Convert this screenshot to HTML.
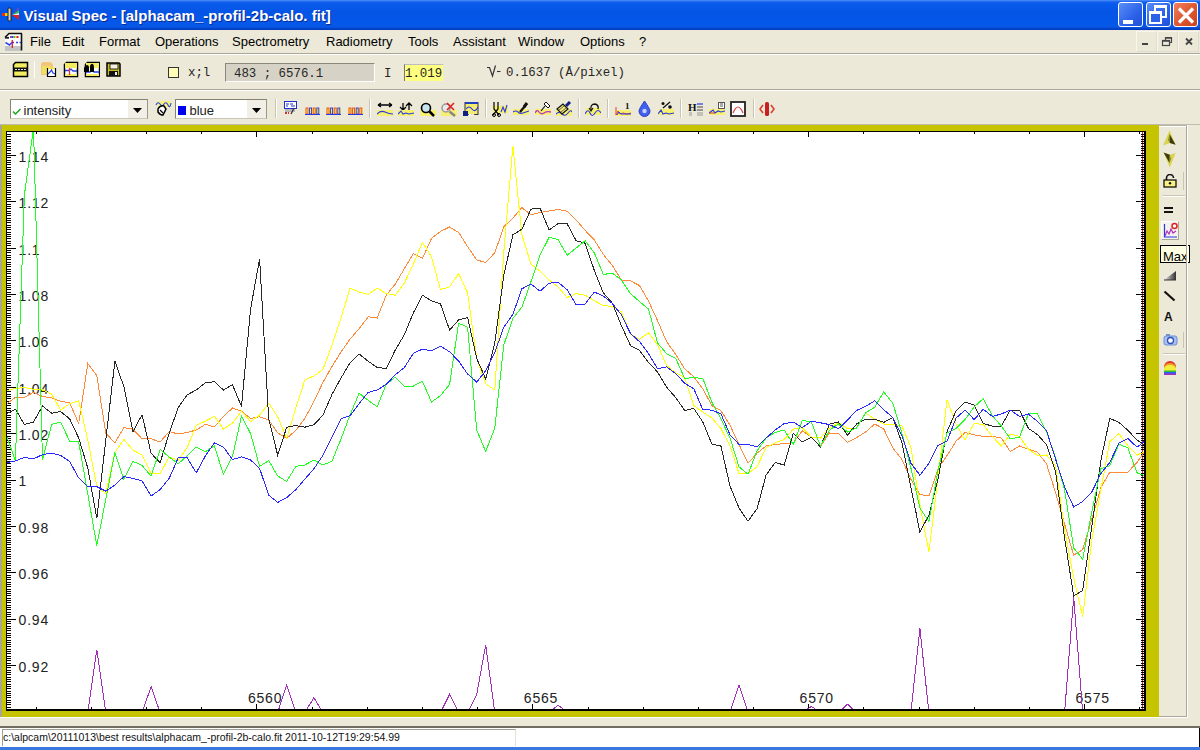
<!DOCTYPE html>
<html><head><meta charset="utf-8">
<style>
*{margin:0;padding:0;box-sizing:border-box}
html,body{width:1200px;height:750px;overflow:hidden;background:#ECE9D8;font-family:"Liberation Sans",sans-serif;position:relative}
.a{position:absolute}
#title{left:0;top:0;width:1200px;height:30px;background:linear-gradient(#5599FF 0px,#2A70F2 1px,#0A5CEC 3px,#0554E6 12px,#0458EA 24px,#0A56E4 27px,#0040C4 29px,#0038B8 30px)}
#title .t{left:23.5px;top:6.5px;color:#fff;font-weight:bold;font-size:15px;white-space:nowrap;text-shadow:1px 1px 0 #0A2A90}
.wb{top:2px;width:25px;height:25px;border:1px solid #fff;border-radius:3px;background:#2C6AF5}
.menu{top:30px;height:23px;left:0;width:1200px}
.menu span{position:absolute;top:4px;font-size:13px;color:#000;white-space:nowrap}
.hl{left:0;width:1200px;height:1px;background:#ACA899}
.hw{left:0;width:1200px;height:1px;background:#fff}
.mono{font-family:"Liberation Mono",monospace;font-size:12.5px;color:#262626;white-space:nowrap}
.sep{width:1px;height:22px;background:#C5C2B2;border-right:1px solid #fff}
.combo{background:#fff;border:1px solid #7F9DB9}
</style></head><body>
<div id="title" class="a">
  <svg class="a" style="left:2px;top:6px" width="18" height="16" viewBox="0 0 18 16">
    <rect x="0" y="7" width="7" height="3" fill="#E8D800"/><rect x="0" y="7" width="3" height="3" fill="#E03020"/>
    <rect x="6" y="2" width="3" height="13" rx="1" fill="#D8D0C0" stroke="#222" stroke-width="1"/>
    <polygon points="10,9 17,4 17,7" fill="#40C040"/><polygon points="10,9 17,9 17,14" fill="#E02020"/>
    <polygon points="10,8 17,1 17,3" fill="#8040C0"/><polygon points="10,9 17,7 17,9" fill="#F0F0F0"/>
  </svg>
  <div class="a t">Visual Spec - [alphacam_-profil-2b-calo. fit]</div>
  <div class="a wb" style="left:1118px;background:linear-gradient(135deg,#5A8EF8,#2C62E8 60%,#2050D8)"><div class="a" style="left:4px;top:17px;width:10px;height:4px;background:#fff"></div></div>
  <div class="a wb" style="left:1146px;background:linear-gradient(135deg,#5A8EF8,#2C62E8 60%,#2050D8)"><div class="a" style="left:7px;top:2px;width:13px;height:13px;border:2px solid #fff;border-top-width:3px"></div><div class="a" style="left:2px;top:8px;width:13px;height:13px;border:2px solid #fff;border-top-width:3px;background:#2C62E8"></div></div>
  <div class="a wb" style="left:1173px;background:linear-gradient(135deg,#F08060,#E05A30 50%,#C84020)">
    <svg class="a" style="left:2px;top:3px" width="20" height="19" viewBox="0 0 20 19"><path d="M3 2.5L17 16.5M17 2.5L3 16.5" stroke="#fff" stroke-width="3.2"/></svg></div></div>
</div>
<div class="a menu">
  <svg class="a" style="left:4px;top:1px" width="20" height="21" viewBox="0 0 20 21">
    <path d="M1 6L5 2H18V19H1Z" fill="#fff"/><rect x="1" y="15" width="16" height="5" fill="#C4C4C4"/>
    <path d="M1 6.5L5 2.5H18M17.5 2.5V19.5" fill="none" stroke="#111" stroke-width="1.6"/><path d="M1 6.8H5" stroke="#222" stroke-width="1.8"/>
    <rect x="6" y="5" width="2" height="2" fill="#A040C0"/><rect x="8" y="5" width="1.5" height="2" fill="#3040F0"/><rect x="9.5" y="5" width="1.5" height="2" fill="#30D030"/><rect x="11" y="5" width="1.5" height="2" fill="#F0E020"/><rect x="12.5" y="5" width="2" height="2" fill="#E02020"/>
    <path d="M1.5 11.5L5.5 14L8 11.5H10M12 11.5H14M15.5 11.5H17" stroke="#3040F0" fill="none" stroke-width="1.5"/><path d="M8.3 9V17" stroke="#E02020" stroke-width="1.3"/>
  </svg>
  <span style="left:30px">File</span><span style="left:62px">Edit</span><span style="left:99px">Format</span><span style="left:155px">Operations</span><span style="left:232px">Spectrometry</span><span style="left:326px">Radiometry</span><span style="left:408px">Tools</span><span style="left:453px">Assistant</span><span style="left:518px">Window</span><span style="left:580px">Options</span><span style="left:639px">?</span>
  <div class="a" style="left:1136px;top:1px;width:21px;height:21px;border:1px solid #F8F6EE;border-right-color:#E0DDD0;border-bottom-color:#E0DDD0"></div>
  <div class="a" style="left:1157px;top:1px;width:21px;height:21px;border:1px solid #F8F6EE;border-right-color:#E0DDD0;border-bottom-color:#E0DDD0"></div>
  <div class="a" style="left:1178px;top:1px;width:21px;height:21px;border:1px solid #F8F6EE;border-right-color:#E0DDD0;border-bottom-color:#E0DDD0"></div>
  <svg class="a" style="left:1136px;top:0" width="64" height="23" viewBox="0 0 64 23">
    <rect x="6" y="13" width="6" height="2" fill="#444"/>
    <path d="M29.5 10.5V7.5H35.5V12.5H33.5" fill="none" stroke="#444" stroke-width="1.2"/><rect x="26.5" y="10.5" width="7" height="5" fill="none" stroke="#444" stroke-width="1.2"/><path d="M29 8H35M26 11H33" stroke="#444" stroke-width="1.5"/>
    <path d="M50 8.5L56 14.5M56 8.5L50 14.5" stroke="#444" stroke-width="1.8"/>
  </svg>
</div>
<div class="a hl" style="top:53px"></div><div class="a hw" style="top:54px"></div>
<div class="a hl" style="top:89px"></div><div class="a hw" style="top:90px"></div>
<div class="a hl" style="top:124px;background:#C0BDB0"></div>

<!-- toolbar 1 -->
<svg class="a" style="left:12px;top:61px" width="17" height="17" viewBox="0 0 17 17">
  <path d="M3.5 1.5H15.5V15.5H1.5V3.5Z" fill="#F4EC60" stroke="#000" stroke-width="1.5"/>
  <rect x="1.5" y="6.5" width="14" height="4" fill="#111"/><path d="M3 8.5H14" stroke="#ddd" stroke-width="1" stroke-dasharray="2 1"/>
</svg>
<div class="a sep" style="left:34px;top:61px;height:17px"></div>
<svg class="a" style="left:40px;top:61px" width="17" height="17" viewBox="0 0 17 17">
  <path d="M1 4Q1 1 4 1H9Q12 1 13 4V14H1Z" fill="#F4C070" opacity=".9"/><path d="M2 5H11V13H2Z" fill="#F0E060"/>
  <path d="M7.5 7.5H15.5V15.5H7.5Z" fill="#fff" stroke="#000" stroke-width="1.2"/><path d="M8 7.5H15" stroke="#F0E050" stroke-width="1.5"/>
  <path d="M8 13L10 11L11.5 9L13 12L15 13" stroke="#2040E0" fill="none" stroke-width="1.2"/>
</svg>
<svg class="a" style="left:63px;top:61px" width="16" height="17" viewBox="0 0 16 17">
  <path d="M3.5 1.5H14.5V15.5H1.5V3.5Z" fill="#fff" stroke="#000" stroke-width="1.5"/>
  <rect x="2" y="2" width="12" height="5" fill="#F4EC60"/><rect x="2" y="13" width="12" height="2" fill="#F4EC60"/>
  <path d="M2 9.5H6L8 8L10 10H14" stroke="#2040E0" fill="none" stroke-width="1.3"/><path d="M6.5 7V14" stroke="#E03030" stroke-width="1.3"/>
</svg>
<svg class="a" style="left:84px;top:61px" width="16" height="17" viewBox="0 0 16 17">
  <path d="M3.5 1.5H15.5V15.5H1.5V3.5Z" fill="#fff" stroke="#000" stroke-width="1.5"/>
  <rect x="2" y="2" width="13" height="5" fill="#F4EC60"/><rect x="2" y="13" width="13" height="2" fill="#F4EC60"/>
  <path d="M2 11L6 11L8 8L10 11H15" stroke="#2040E0" fill="none" stroke-width="1.3"/>
  <path d="M0 7Q1 4 3 4Q5 4 5 7V11H0Z M6 5Q7 2 9 3Q10 4 10 7V11H6Z" fill="#000"/>
</svg>
<svg class="a" style="left:106px;top:62px" width="15" height="15" viewBox="0 0 15 15">
  <path d="M1 1H13L14 2V14H1Z" fill="#C8C020" stroke="#000" stroke-width="1.5"/>
  <rect x="4" y="2" width="8" height="5" fill="#F4F0E0" stroke="#000" stroke-width=".8"/><rect x="3" y="9" width="9" height="5" fill="#111"/><rect x="9" y="10" width="2" height="3" fill="#eee"/>
</svg>
<div class="a" style="left:168px;top:67px;width:11px;height:11px;background:#FFFFB8;border:1px solid #333"></div>
<div class="a mono" style="left:188px;top:66px;font-size:12.4px;letter-spacing:0">x;l</div>
<div class="a" style="left:225px;top:63px;width:150px;height:19px;background:#D6D3C6;border-top:1px solid #8A887C;border-left:1px solid #8A887C;border-bottom:1px solid #fff;border-right:1px solid #fff"></div>
<div class="a mono" style="left:234px;top:67px;font-size:12.4px;letter-spacing:0">483 ; 6576.1</div>
<div class="a mono" style="left:384px;top:67px;font-size:12.4px;letter-spacing:0">I</div>
<div class="a" style="left:404px;top:64px;width:39px;height:17px;background:#FFFF80;border-left:1px solid #777;border-top:1px solid #bbb"></div>
<div class="a mono" style="left:405px;top:67px;font-size:12.4px;letter-spacing:0">1.019</div>
<svg class="a" style="left:486px;top:64px" width="16" height="14" viewBox="0 0 16 14"><path d="M1 3.5H3.5L6.5 12L9.5 1.5" fill="none" stroke="#333" stroke-width="1.2"/><path d="M11 7.5H14.5" stroke="#333" stroke-width="1.1"/></svg>
<div class="a mono" style="left:506px;top:66px;font-size:12.4px;letter-spacing:0">0.1637 (&#197;/pixel)</div>
<!-- toolbar 2 -->
<div class="a combo" style="left:10px;top:99px;width:138px;height:20px;border:1px solid #858373;border-bottom-color:#C8C6BA;border-right-color:#9A988A"></div>
<div class="a" style="left:128px;top:100px;width:19px;height:18px;background:#F2F0E6"></div>
<svg class="a" style="left:133px;top:108px" width="10" height="6"><path d="M0 0H9L4.5 5Z" fill="#000"/></svg>
<svg class="a" style="left:12px;top:106px" width="10" height="10"><path d="M1 5.5L3.5 8L8.5 3" fill="none" stroke="#20A020" stroke-width="1.5"/></svg>
<div class="a" style="left:23.5px;top:103px;font-size:13px;color:#222">intensity</div>
<svg class="a" style="left:155px;top:100px" width="17" height="17" viewBox="0 0 17 17">
  <rect x="3" y="1" width="13" height="6" fill="#F8F080"/><path d="M1 5Q3 1 5 4T9 4T13 5T16 3" fill="none" stroke="#2040E0" stroke-width="1.1"/>
  <path d="M3 9Q5 5 9 6L11 9L8 15Q5 15 3 12Z" fill="#fff" stroke="#000" stroke-width="1.5"/><path d="M5 10L8 13" stroke="#000" stroke-width="1.2"/>
</svg>
<div class="a combo" style="left:175px;top:99px;width:92px;height:20px;border:1px solid #858373;border-bottom-color:#C8C6BA;border-right-color:#9A988A"></div>
<div class="a" style="left:247px;top:100px;width:19px;height:18px;background:#F2F0E6"></div>
<svg class="a" style="left:252px;top:108px" width="10" height="6"><path d="M0 0H9L4.5 5Z" fill="#000"/></svg>
<div class="a" style="left:178px;top:106px;width:8px;height:9px;background:#0000F0"></div>
<div class="a" style="left:189.5px;top:103px;font-size:13px;color:#222">blue</div>

<!-- ICONS -->
<div class="a" style="left:275px;top:99px;width:1px;height:19px;background:#C8C5B4"></div><div class="a" style="left:276px;top:99px;width:1px;height:19px;background:#fff"></div>
<svg class="a" style="left:284px;top:101px" width="13" height="14" viewBox="0 0 13 14"><rect x="0.5" y="0.5" width="12" height="7" fill="#fff" stroke="#2030D0"/><path d="M2 3H5M6 3H9M2 5H4M7 5H11" stroke="#2030D0" stroke-width="1.2"/><rect x="1" y="8" width="10" height="3" fill="#B8B8B8"/><path d="M1 12H5" stroke="#D03030" stroke-width="2" stroke-dasharray="2 1"/><path d="M7 13L10 7" stroke="#333" stroke-width="1.3"/></svg>
<svg class="a" style="left:305px;top:107px" width="15" height="9" viewBox="0 0 15 9"><rect x="0" y="1" width="15" height="6" fill="#F8F070"/><rect x="1.0" y="1" width="2" height="6" fill="none" stroke="#E84020" stroke-width="0.9"/><rect x="4.6" y="1" width="2" height="6" fill="none" stroke="#2030E0" stroke-width="0.9"/><rect x="8.2" y="1" width="2" height="6" fill="none" stroke="#E84020" stroke-width="0.9"/><rect x="11.8" y="1" width="2" height="6" fill="none" stroke="#2030E0" stroke-width="0.9"/><path d="M0 7.5H15" stroke="#2838E8" stroke-width="1"/></svg>
<svg class="a" style="left:326px;top:107px" width="15" height="9" viewBox="0 0 15 9"><rect x="0" y="1" width="15" height="6" fill="#F8F070"/><rect x="1.0" y="1" width="2" height="6" fill="none" stroke="#E84020" stroke-width="0.9"/><rect x="4.6" y="1" width="2" height="6" fill="none" stroke="#2030E0" stroke-width="0.9"/><rect x="8.2" y="1" width="2" height="6" fill="none" stroke="#E84020" stroke-width="0.9"/><rect x="11.8" y="1" width="2" height="6" fill="none" stroke="#2030E0" stroke-width="0.9"/><path d="M0 7.5H15" stroke="#2838E8" stroke-width="1"/></svg>
<svg class="a" style="left:348px;top:107px" width="15" height="9" viewBox="0 0 15 9"><rect x="0" y="1" width="15" height="6" fill="#F8F070"/><rect x="1.0" y="1" width="2" height="6" fill="none" stroke="#E84020" stroke-width="0.9"/><rect x="4.6" y="1" width="2" height="6" fill="none" stroke="#E84020" stroke-width="0.9"/><rect x="8.2" y="1" width="2" height="6" fill="none" stroke="#2030E0" stroke-width="0.9"/><rect x="11.8" y="1" width="2" height="6" fill="none" stroke="#E84020" stroke-width="0.9"/><path d="M0 7.5H15" stroke="#2838E8" stroke-width="1"/></svg>
<div class="a" style="left:369px;top:99px;width:1px;height:19px;background:#C8C5B4"></div><div class="a" style="left:370px;top:99px;width:1px;height:19px;background:#fff"></div>
<svg class="a" style="left:377px;top:102px" width="16" height="15" viewBox="0 0 16 15"><path d="M1 3H15M1 3L4 1M1 3L4 5M15 3L12 1M15 3L12 5" stroke="#000" stroke-width="1.3" fill="none"/><rect x="0" y="8" width="16" height="6" fill="#F8F070"/><path d="M0 12Q4 8 8 10T16 12" fill="none" stroke="#2838E8" stroke-width="1.1"/></svg>
<svg class="a" style="left:398px;top:102px" width="16" height="15" viewBox="0 0 16 15"><path d="M5 1V8M2 5L5 8L8 5M11 8V1M8 4L11 1L14 4" stroke="#000" stroke-width="1.3" fill="none"/><rect x="0" y="8" width="16" height="6" fill="#F8F070"/><path d="M0 12L3 9L5 12L8 11L11 12L16 11" fill="none" stroke="#2838E8" stroke-width="1.1"/></svg>
<svg class="a" style="left:420px;top:102px" width="16" height="15" viewBox="0 0 16 15"><rect x="0" y="8" width="16" height="6" fill="#F8F070"/><circle cx="6" cy="6" r="4.5" fill="#C8E4F0" stroke="#000" stroke-width="1.6"/><path d="M9.5 9.5L14 14" stroke="#000" stroke-width="2.5"/></svg>
<svg class="a" style="left:441px;top:102px" width="16" height="15" viewBox="0 0 16 15"><rect x="0" y="8" width="16" height="6" fill="#F8F070"/><circle cx="5" cy="6" r="4" fill="#E8E8E8" stroke="#999" stroke-width="1.5"/><path d="M8.5 9.5L14 14" stroke="#888" stroke-width="2.5"/><path d="M6 1L13 8M13 1L6 8" stroke="#E02020" stroke-width="1.6"/></svg>
<svg class="a" style="left:463px;top:101px" width="16" height="16" viewBox="0 0 16 16"><rect x="2" y="1.5" width="13" height="12" fill="#F4EC70" stroke="#333" stroke-width="1"/><rect x="2" y="1" width="13" height="2" fill="#2040C0"/><path d="M3 8Q6 4 9 8T15 6" fill="none" stroke="#2838E8" stroke-width="1.1"/><rect x="0" y="10" width="5" height="5" fill="#102080"/><path d="M6 13Q8 15 11 13" stroke="#fff" stroke-width="1.5" fill="none"/></svg>
<div class="a" style="left:485px;top:99px;width:1px;height:19px;background:#C8C5B4"></div><div class="a" style="left:486px;top:99px;width:1px;height:19px;background:#fff"></div>
<svg class="a" style="left:492px;top:101px" width="16" height="16" viewBox="0 0 16 16"><rect x="1" y="5" width="15" height="7" fill="#F8F070"/><path d="M9 11L11 6L13 11L15 4" fill="none" stroke="#2838E8" stroke-width="1.1"/><path d="M2 1V8L7 14M6 1V8L1 14" stroke="#000" stroke-width="1.2" fill="none"/><circle cx="2" cy="14" r="1.5" fill="none" stroke="#000"/><circle cx="7" cy="14" r="1.5" fill="none" stroke="#000"/></svg>
<svg class="a" style="left:513px;top:101px" width="16" height="16" viewBox="0 0 16 16"><rect x="0" y="8" width="16" height="6" fill="#F8F070"/><path d="M0 11Q3 9 5 11T10 12T16 10" fill="none" stroke="#2838E8" stroke-width="1.1"/><path d="M7 11L12 5" stroke="#111" stroke-width="2.2"/><path d="M11 6L14 2" stroke="#111" stroke-width="3"/></svg>
<svg class="a" style="left:535px;top:101px" width="16" height="16" viewBox="0 0 16 16"><rect x="0" y="8" width="16" height="6" fill="#F8F070"/><path d="M0 12Q2 8 4 11T9 12T16 11" fill="none" stroke="#C030C0" stroke-width="1.3"/><path d="M6 10L10 5" stroke="#111" stroke-width="1.2"/><path d="M9 3L11 1L15 5L13 7Z" fill="#fff" stroke="#111"/></svg>
<svg class="a" style="left:556px;top:101px" width="16" height="16" viewBox="0 0 16 16"><rect x="0" y="8" width="16" height="7" fill="#F8F070"/><path d="M0 13Q3 10 6 13T12 12T16 11" fill="none" stroke="#2838E8" stroke-width="1.1"/><path d="M1 8L7 3L12 8L6 13Z" fill="#F0E870" stroke="#111" stroke-width="1.2"/><path d="M3 9L8 5M5 11L10 7" stroke="#666"/><path d="M10 5L14 1" stroke="#102080" stroke-width="3"/></svg>
<div class="a" style="left:578px;top:99px;width:1px;height:19px;background:#C8C5B4"></div><div class="a" style="left:579px;top:99px;width:1px;height:19px;background:#fff"></div>
<svg class="a" style="left:585px;top:101px" width="16" height="16" viewBox="0 0 16 16"><rect x="1" y="7" width="15" height="7" fill="#F8F070"/><path d="M0 13Q3 7 5 12T10 12T16 12" fill="none" stroke="#2838E8" stroke-width="1.1"/><path d="M6 9Q5 3 10 3Q14 4 13 8" fill="none" stroke="#111" stroke-width="1.3"/><path d="M4 7L6 10L8 7" fill="none" stroke="#111" stroke-width="1.2"/></svg>
<div class="a" style="left:607px;top:99px;width:1px;height:19px;background:#C8C5B4"></div><div class="a" style="left:608px;top:99px;width:1px;height:19px;background:#fff"></div>
<svg class="a" style="left:615px;top:101px" width="16" height="16" viewBox="0 0 16 16"><rect x="0" y="9" width="16" height="6" fill="#F8F070"/><path d="M1 14V6M1 14L3 10L5 13L8 12L12 13L16 12" fill="none" stroke="#E04040" stroke-width="1"/><path d="M2 14L4 11L6 13H16" stroke="#2838E8" fill="none"/><text x="10" y="8" font-family="Liberation Serif" font-weight="bold" font-size="9" fill="#111">1</text></svg>
<svg class="a" style="left:637px;top:100px" width="15" height="17" viewBox="0 0 15 17"><path d="M7.5 1Q13 9 13 11A5.5 5.5 0 0 1 2 11Q2 9 7.5 1Z" fill="#4060F0" stroke="#3040C0"/><circle cx="7.5" cy="11" r="2.2" fill="#C8D0F8"/></svg>
<svg class="a" style="left:658px;top:101px" width="16" height="16" viewBox="0 0 16 16"><rect x="1" y="8" width="15" height="6" fill="#F8F070"/><path d="M0 13L3 9L5 13L8 12L11 13L16 12" fill="none" stroke="#2838E8" stroke-width="1.1"/><path d="M5 7L12 1" stroke="#111" stroke-width="1.3"/><circle cx="5" cy="2.5" r="1.5" fill="#111"/><circle cx="12" cy="6" r="1.8" fill="#111"/></svg>
<div class="a" style="left:680px;top:99px;width:1px;height:19px;background:#C8C5B4"></div><div class="a" style="left:681px;top:99px;width:1px;height:19px;background:#fff"></div>
<svg class="a" style="left:688px;top:101px" width="16" height="16" viewBox="0 0 16 16"><text x="0" y="10" font-family="Liberation Serif" font-weight="bold" font-size="11" fill="#111">H</text><path d="M9 3H15" stroke="#2838E8" stroke-width="1.2"/><path d="M9 6H15M9 9H15" stroke="#444" stroke-width="1"/><path d="M1 12H4M9 12H15M1 14H4M9 14H15" stroke="#999"/></svg>
<svg class="a" style="left:709px;top:101px" width="16" height="16" viewBox="0 0 16 16"><rect x="0" y="8" width="16" height="6" fill="#F8F070"/><path d="M0 12L4 9L6 12L9 10L12 11L16 10" fill="none" stroke="#2838E8" stroke-width="1.2"/><path d="M0 12H6" stroke="#C04040"/><rect x="9.5" y="1.5" width="6" height="6" fill="#fff" stroke="#555"/><path d="M11 3H14M11 5H14" stroke="#555"/></svg>
<svg class="a" style="left:730px;top:101px" width="16" height="16" viewBox="0 0 16 16"><rect x="1" y="1" width="14" height="14" fill="#fff" stroke="#222" stroke-width="1.8"/><path d="M3 12Q8 0 13 12" fill="none" stroke="#E04040" stroke-width="1.2"/></svg>
<div class="a" style="left:753px;top:99px;width:1px;height:19px;background:#C8C5B4"></div><div class="a" style="left:754px;top:99px;width:1px;height:19px;background:#fff"></div>
<svg class="a" style="left:759px;top:101px" width="16" height="16" viewBox="0 0 16 16"><rect x="6" y="1" width="4" height="14" rx="1.5" fill="#C82020"/><path d="M4 4L1 8L4 12M12 4L15 8L12 12" fill="none" stroke="#D84030" stroke-width="1.6"/></svg>
<svg class="a" style="left:1162px;top:130px" width="15" height="16" viewBox="0 0 15 16"><path d="M7.5 0.5L1 15.4L7.8 13L13.6 14.8Z" fill="#D8D450"/><path d="M7.5 4L7.8 13L13.6 14.8Z" fill="#3C3A10"/><path d="M7.5 4L6 10L7.8 13Z" fill="#8A8620"/></svg>
<svg class="a" style="left:1162px;top:152px" width="15" height="16" viewBox="0 0 15 16"><path d="M7.8 15.4L1.6 0.5L7.8 2.8L13.6 1Z" fill="#D8D450"/><path d="M1.6 0.5L7.8 2.8L7.5 11Z" fill="#3C3A10"/><path d="M7.8 2.8L9 7L7.5 11Z" fill="#8A8620"/></svg>
<svg class="a" style="left:1163px;top:174px" width="14" height="14" viewBox="0 0 14 14"><path d="M3.5 6V4A3.5 3.5 0 0 1 10.5 4" fill="none" stroke="#111" stroke-width="1.6"/><rect x="1" y="6" width="12" height="7" fill="#F8F080" stroke="#111" stroke-width="1.3"/><circle cx="7" cy="9.3" r="1.2" fill="#111"/></svg>
<div class="a" style="left:1183px;top:172px;width:1px;height:18px;background:#C8C5B4"></div>
<div class="a" style="left:1163px;top:195px;width:22px;height:1px;background:#C8C5B4"></div><div class="a" style="left:1163px;top:196px;width:22px;height:1px;background:#fff"></div>
<div class="a" style="left:1164px;top:207px;width:9px;height:2px;background:#111"></div><div class="a" style="left:1164px;top:211px;width:9px;height:2px;background:#111"></div>
<div class="a" style="left:1161px;top:221px;width:18px;height:19px;background:#F4F2EA;border:1px solid #fff;border-right-color:#A8A698;border-bottom-color:#A8A698"></div>
<svg class="a" style="left:1163px;top:222px" width="15" height="17" viewBox="0 0 15 17"><path d="M1.5 2V15H14" fill="none" stroke="#2838E8" stroke-width="1.2"/><path d="M2 14L4 9L6 12L8 7L10 11L13 9" fill="none" stroke="#B030C0" stroke-width="1.2"/><circle cx="11.5" cy="4" r="2.5" fill="#fff" stroke="#E02020" stroke-width="1.5"/></svg>
<div class="a" style="left:1160px;top:245px;width:30px;height:18px;background:#FFFFE1;border:1px solid #000"></div>
<div class="a" style="left:1163px;top:248.5px;font-size:13px;color:#000">Max</div>
<svg class="a" style="left:1163px;top:270px" width="14" height="11" viewBox="0 0 14 11"><defs><linearGradient id="gg" x1="0" x2="1"><stop offset="0" stop-color="#E8E8E8"/><stop offset="1" stop-color="#303030"/></linearGradient></defs><path d="M1 10L13 1V10Z" fill="url(#gg)"/><path d="M1 10H13" stroke="#333"/></svg>
<svg class="a" style="left:1163px;top:290px" width="13" height="12" viewBox="0 0 13 12"><path d="M1.5 1.5L11.5 10.5" stroke="#111" stroke-width="2.2"/></svg>
<div class="a" style="left:1164px;top:310px;font-size:12px;font-weight:bold;color:#111">A</div>
<svg class="a" style="left:1163px;top:333px" width="15" height="13" viewBox="0 0 15 13"><rect x="1" y="3" width="13" height="9" rx="2" fill="#A8C0F0" stroke="#7090D0"/><circle cx="7.5" cy="7.5" r="3" fill="#fff" stroke="#3050C0" stroke-width="1.3"/><rect x="3" y="1" width="4" height="2" fill="#7090D0"/></svg>
<div class="a" style="left:1183px;top:332px;width:1px;height:16px;background:#C8C5B4"></div>
<div class="a" style="left:1163px;top:353px;width:22px;height:1px;background:#C8C5B4"></div><div class="a" style="left:1163px;top:354px;width:22px;height:1px;background:#fff"></div>
<svg class="a" style="left:1163px;top:360px" width="14" height="16" viewBox="0 0 14 16"><path d="M1 15V7A6 6 0 0 1 13 7V15Z" fill="#E03030"/><path d="M1 15V8A6 5 0 0 1 13 8V15Z" fill="#F0A020"/><path d="M1 15V9A6 4 0 0 1 13 9V15Z" fill="#F0F040"/><path d="M1 15V10.5H13V15Z" fill="#30C030"/><path d="M1 15V12H13V15Z" fill="#3060F0"/><path d="M1 15V13.5H13V15Z" fill="#A030C0"/></svg>
<!-- /ICONS -->
<!-- status bar -->
<div class="a" style="left:0;top:726px;width:1200px;height:2px;background:#716F64"></div>
<div class="a" style="left:0;top:728px;width:1200px;height:20px;background:#fff"></div>
<div class="a" style="left:1199px;top:728px;width:1px;height:20px;background:#000"></div>
<div class="a" style="left:2px;top:729px;width:514px;height:17px;border-left:1px solid #A0A090;border-top:1px solid #A0A090;border-right:1px solid #E4E2D8"></div>
<div class="a" style="left:0;top:747px;width:1200px;height:3px;background:#3A78E0"></div>
<div class="a" style="left:3px;top:731px;font-size:10.5px;white-space:nowrap;color:#111">c:\alpcam\20111013\best results\alphacam_-profil-2b-calo.fit 2011-10-12T19:29:54.99</div>
<!-- chart frame -->
<div class="a" style="left:0;top:125px;width:2px;height:593px;background:#A8A690"></div>
<div class="a" style="left:2px;top:125px;width:1157px;height:592px;background:#C6C300"></div>
<div class="a" style="left:6px;top:131px;width:1140px;height:580px;background:#000"></div>
<div class="a" style="left:7px;top:132px;width:1137px;height:577px;background:#fff"></div>
<div class="a" style="left:0;top:717px;width:1187px;height:1px;background:#fff"></div>
<!-- CHART -->
<svg class="a" style="left:0;top:0" width="1200" height="750" viewBox="0 0 1200 750">
<defs><clipPath id="cp"><rect x="7" y="132" width="1137" height="577"/></clipPath></defs>
<path d="M1142.5 132V709" stroke="#D82828" stroke-width="1" shape-rendering="crispEdges"/>
<path d="M7 707.5H11M1141 707.5H1144M7 704.5H11M1141 704.5H1144M7 702.5H11M1141 702.5H1144M7 700.5H11M1141 700.5H1144M7 697.5H11M1141 697.5H1144M7 695.5H11M1141 695.5H1144M7 693.5H11M1141 693.5H1144M7 691.5H11M1141 691.5H1144M7 688.5H11M1141 688.5H1144M7 686.5H11M1141 686.5H1144M7 684.5H11M1141 684.5H1144M7 681.5H11M1141 681.5H1144M7 679.5H11M1141 679.5H1144M7 677.5H11M1141 677.5H1144M7 674.5H11M1141 674.5H1144M7 672.5H11M1141 672.5H1144M7 670.5H11M1141 670.5H1144M7 667.5H11M1141 667.5H1144M7 665.5H16M1136 665.5H1144M7 663.5H11M1141 663.5H1144M7 660.5H11M1141 660.5H1144M7 658.5H11M1141 658.5H1144M7 656.5H11M1141 656.5H1144M7 653.5H11M1141 653.5H1144M7 651.5H11M1141 651.5H1144M7 649.5H11M1141 649.5H1144M7 646.5H11M1141 646.5H1144M7 644.5H11M1141 644.5H1144M7 642.5H11M1141 642.5H1144M7 640.5H11M1141 640.5H1144M7 637.5H11M1141 637.5H1144M7 635.5H11M1141 635.5H1144M7 633.5H11M1141 633.5H1144M7 630.5H11M1141 630.5H1144M7 628.5H11M1141 628.5H1144M7 626.5H11M1141 626.5H1144M7 623.5H11M1141 623.5H1144M7 621.5H11M1141 621.5H1144M7 619.5H16M1136 619.5H1144M7 616.5H11M1141 616.5H1144M7 614.5H11M1141 614.5H1144M7 612.5H11M1141 612.5H1144M7 609.5H11M1141 609.5H1144M7 607.5H11M1141 607.5H1144M7 605.5H11M1141 605.5H1144M7 602.5H11M1141 602.5H1144M7 600.5H11M1141 600.5H1144M7 598.5H11M1141 598.5H1144M7 595.5H11M1141 595.5H1144M7 593.5H11M1141 593.5H1144M7 591.5H11M1141 591.5H1144M7 589.5H11M1141 589.5H1144M7 586.5H11M1141 586.5H1144M7 584.5H11M1141 584.5H1144M7 582.5H11M1141 582.5H1144M7 579.5H11M1141 579.5H1144M7 577.5H11M1141 577.5H1144M7 575.5H11M1141 575.5H1144M7 572.5H16M1136 572.5H1144M7 570.5H11M1141 570.5H1144M7 568.5H11M1141 568.5H1144M7 565.5H11M1141 565.5H1144M7 563.5H11M1141 563.5H1144M7 561.5H11M1141 561.5H1144M7 558.5H11M1141 558.5H1144M7 556.5H11M1141 556.5H1144M7 554.5H11M1141 554.5H1144M7 551.5H11M1141 551.5H1144M7 549.5H11M1141 549.5H1144M7 547.5H11M1141 547.5H1144M7 544.5H11M1141 544.5H1144M7 542.5H11M1141 542.5H1144M7 540.5H11M1141 540.5H1144M7 538.5H11M1141 538.5H1144M7 535.5H11M1141 535.5H1144M7 533.5H11M1141 533.5H1144M7 531.5H11M1141 531.5H1144M7 528.5H11M1141 528.5H1144M7 526.5H16M1136 526.5H1144M7 524.5H11M1141 524.5H1144M7 521.5H11M1141 521.5H1144M7 519.5H11M1141 519.5H1144M7 517.5H11M1141 517.5H1144M7 514.5H11M1141 514.5H1144M7 512.5H11M1141 512.5H1144M7 510.5H11M1141 510.5H1144M7 507.5H11M1141 507.5H1144M7 505.5H11M1141 505.5H1144M7 503.5H11M1141 503.5H1144M7 500.5H11M1141 500.5H1144M7 498.5H11M1141 498.5H1144M7 496.5H11M1141 496.5H1144M7 493.5H11M1141 493.5H1144M7 491.5H11M1141 491.5H1144M7 489.5H11M1141 489.5H1144M7 487.5H11M1141 487.5H1144M7 484.5H11M1141 484.5H1144M7 482.5H11M1141 482.5H1144M7 480.5H16M1136 480.5H1144M7 477.5H11M1141 477.5H1144M7 475.5H11M1141 475.5H1144M7 473.5H11M1141 473.5H1144M7 470.5H11M1141 470.5H1144M7 468.5H11M1141 468.5H1144M7 466.5H11M1141 466.5H1144M7 463.5H11M1141 463.5H1144M7 461.5H11M1141 461.5H1144M7 459.5H11M1141 459.5H1144M7 456.5H11M1141 456.5H1144M7 454.5H11M1141 454.5H1144M7 452.5H11M1141 452.5H1144M7 449.5H11M1141 449.5H1144M7 447.5H11M1141 447.5H1144M7 445.5H11M1141 445.5H1144M7 442.5H11M1141 442.5H1144M7 440.5H11M1141 440.5H1144M7 438.5H11M1141 438.5H1144M7 436.5H11M1141 436.5H1144M7 433.5H16M1136 433.5H1144M7 431.5H11M1141 431.5H1144M7 429.5H11M1141 429.5H1144M7 426.5H11M1141 426.5H1144M7 424.5H11M1141 424.5H1144M7 422.5H11M1141 422.5H1144M7 419.5H11M1141 419.5H1144M7 417.5H11M1141 417.5H1144M7 415.5H11M1141 415.5H1144M7 412.5H11M1141 412.5H1144M7 410.5H11M1141 410.5H1144M7 408.5H11M1141 408.5H1144M7 405.5H11M1141 405.5H1144M7 403.5H11M1141 403.5H1144M7 401.5H11M1141 401.5H1144M7 398.5H11M1141 398.5H1144M7 396.5H11M1141 396.5H1144M7 394.5H11M1141 394.5H1144M7 391.5H11M1141 391.5H1144M7 389.5H11M1141 389.5H1144M7 387.5H16M1136 387.5H1144M7 385.5H11M1141 385.5H1144M7 382.5H11M1141 382.5H1144M7 380.5H11M1141 380.5H1144M7 378.5H11M1141 378.5H1144M7 375.5H11M1141 375.5H1144M7 373.5H11M1141 373.5H1144M7 371.5H11M1141 371.5H1144M7 368.5H11M1141 368.5H1144M7 366.5H11M1141 366.5H1144M7 364.5H11M1141 364.5H1144M7 361.5H11M1141 361.5H1144M7 359.5H11M1141 359.5H1144M7 357.5H11M1141 357.5H1144M7 354.5H11M1141 354.5H1144M7 352.5H11M1141 352.5H1144M7 350.5H11M1141 350.5H1144M7 347.5H11M1141 347.5H1144M7 345.5H11M1141 345.5H1144M7 343.5H11M1141 343.5H1144M7 340.5H16M1136 340.5H1144M7 338.5H11M1141 338.5H1144M7 336.5H11M1141 336.5H1144M7 334.5H11M1141 334.5H1144M7 331.5H11M1141 331.5H1144M7 329.5H11M1141 329.5H1144M7 327.5H11M1141 327.5H1144M7 324.5H11M1141 324.5H1144M7 322.5H11M1141 322.5H1144M7 320.5H11M1141 320.5H1144M7 317.5H11M1141 317.5H1144M7 315.5H11M1141 315.5H1144M7 313.5H11M1141 313.5H1144M7 310.5H11M1141 310.5H1144M7 308.5H11M1141 308.5H1144M7 306.5H11M1141 306.5H1144M7 303.5H11M1141 303.5H1144M7 301.5H11M1141 301.5H1144M7 299.5H11M1141 299.5H1144M7 296.5H11M1141 296.5H1144M7 294.5H16M1136 294.5H1144M7 292.5H11M1141 292.5H1144M7 289.5H11M1141 289.5H1144M7 287.5H11M1141 287.5H1144M7 285.5H11M1141 285.5H1144M7 283.5H11M1141 283.5H1144M7 280.5H11M1141 280.5H1144M7 278.5H11M1141 278.5H1144M7 276.5H11M1141 276.5H1144M7 273.5H11M1141 273.5H1144M7 271.5H11M1141 271.5H1144M7 269.5H11M1141 269.5H1144M7 266.5H11M1141 266.5H1144M7 264.5H11M1141 264.5H1144M7 262.5H11M1141 262.5H1144M7 259.5H11M1141 259.5H1144M7 257.5H11M1141 257.5H1144M7 255.5H11M1141 255.5H1144M7 252.5H11M1141 252.5H1144M7 250.5H11M1141 250.5H1144M7 248.5H16M1136 248.5H1144M7 245.5H11M1141 245.5H1144M7 243.5H11M1141 243.5H1144M7 241.5H11M1141 241.5H1144M7 238.5H11M1141 238.5H1144M7 236.5H11M1141 236.5H1144M7 234.5H11M1141 234.5H1144M7 232.5H11M1141 232.5H1144M7 229.5H11M1141 229.5H1144M7 227.5H11M1141 227.5H1144M7 225.5H11M1141 225.5H1144M7 222.5H11M1141 222.5H1144M7 220.5H11M1141 220.5H1144M7 218.5H11M1141 218.5H1144M7 215.5H11M1141 215.5H1144M7 213.5H11M1141 213.5H1144M7 211.5H11M1141 211.5H1144M7 208.5H11M1141 208.5H1144M7 206.5H11M1141 206.5H1144M7 204.5H11M1141 204.5H1144M7 201.5H16M1136 201.5H1144M7 199.5H11M1141 199.5H1144M7 197.5H11M1141 197.5H1144M7 194.5H11M1141 194.5H1144M7 192.5H11M1141 192.5H1144M7 190.5H11M1141 190.5H1144M7 187.5H11M1141 187.5H1144M7 185.5H11M1141 185.5H1144M7 183.5H11M1141 183.5H1144M7 181.5H11M1141 181.5H1144M7 178.5H11M1141 178.5H1144M7 176.5H11M1141 176.5H1144M7 174.5H11M1141 174.5H1144M7 171.5H11M1141 171.5H1144M7 169.5H11M1141 169.5H1144M7 167.5H11M1141 167.5H1144M7 164.5H11M1141 164.5H1144M7 162.5H11M1141 162.5H1144M7 160.5H11M1141 160.5H1144M7 157.5H11M1141 157.5H1144M7 155.5H16M1136 155.5H1144M7 153.5H11M1141 153.5H1144M7 150.5H11M1141 150.5H1144M7 148.5H11M1141 148.5H1144M7 146.5H11M1141 146.5H1144M7 143.5H11M1141 143.5H1144M7 141.5H11M1141 141.5H1144M7 139.5H11M1141 139.5H1144M7 136.5H11M1141 136.5H1144M7 134.5H11M1141 134.5H1144" stroke="#000" stroke-width="1" shape-rendering="crispEdges"/>
<path d="M36.5 132V134M36.5 709V707M91.5 132V134M91.5 709V707M146.5 132V134M146.5 709V707M201.5 132V134M201.5 709V707M256.5 132V137M256.5 709V704M312.5 132V134M312.5 709V707M367.5 132V134M367.5 709V707M422.5 132V134M422.5 709V707M477.5 132V134M477.5 709V707M532.5 132V137M532.5 709V704M588.5 132V134M588.5 709V707M643.5 132V134M643.5 709V707M698.5 132V134M698.5 709V707M753.5 132V134M753.5 709V707M808.5 132V137M808.5 709V704M863.5 132V134M863.5 709V707M919.5 132V134M919.5 709V707M974.5 132V134M974.5 709V707M1029.5 132V134M1029.5 709V707M1084.5 132V137M1084.5 709V704M1139.5 132V134M1139.5 709V707" stroke="#000" stroke-width="1" shape-rendering="crispEdges"/>
<g font-family="Liberation Sans" font-size="14" fill="#222" letter-spacing="0.8"><text x="18.6" y="161.8">1.14</text><text x="18.6" y="208.2">1.12</text><text x="18.6" y="254.5">1.1</text><text x="18.6" y="300.9">1.08</text><text x="18.6" y="347.3">1.06</text><text x="18.6" y="393.6">1.04</text><text x="18.6" y="440.0">1.02</text><text x="18.6" y="486.3">1</text><text x="18.6" y="532.7">0.98</text><text x="18.6" y="579.1">0.96</text><text x="18.6" y="625.4">0.94</text><text x="18.6" y="671.8">0.92</text><text x="247.9" y="703">6560</text><text x="523.8" y="703">6565</text><text x="799.6" y="703">6570</text><text x="1075.5" y="703">6575</text></g>
<g clip-path="url(#cp)" shape-rendering="crispEdges">
<polyline points="6.3,712.5 15.4,712.5 24.4,712.5 33.5,712.5 42.5,712.5 51.6,712.5 60.6,712.5 69.7,712.5 78.7,712.5 87.8,712.5 96.8,650.0 105.8,712.5 114.9,712.5 123.9,712.5 133.0,712.5 142.0,712.5 151.1,686.7 160.1,712.5 169.2,712.5 178.2,712.5 187.2,712.5 196.3,712.5 205.3,712.5 214.4,712.5 223.4,712.5 232.5,712.5 241.5,712.5 250.6,712.5 259.6,712.5 268.7,712.5 277.7,712.5 286.7,685.0 295.8,712.5 304.8,712.5 313.9,697.7 322.9,712.5 332.0,712.5 341.0,712.5 350.1,712.5 359.1,712.5 368.2,712.5 377.2,712.5 386.2,712.5 395.3,712.5 404.3,712.5 413.4,712.5 422.4,712.5 431.5,712.5 440.5,712.5 449.6,694.3 458.6,712.5 467.6,712.5 476.7,694.3 485.7,645.0 494.8,712.5 503.8,712.5 512.9,712.5 521.9,712.5 531.0,712.5 540.0,712.5 549.1,712.5 558.1,705.0 567.1,712.5 576.2,712.5 585.2,712.5 594.3,712.5 603.3,712.5 612.4,712.5 621.4,712.5 630.5,712.5 639.5,712.5 648.5,712.5 657.6,712.5 666.6,712.5 675.7,712.5 684.7,712.5 693.8,712.5 702.8,712.5 711.9,712.5 720.9,712.5 730.0,712.5 739.0,685.0 748.0,712.5 757.1,712.5 766.1,712.5 775.2,712.5 784.2,712.5 793.3,712.5 802.3,712.5 811.4,706.4 820.4,712.5 829.4,712.5 838.5,712.5 847.5,704.2 856.6,712.5 865.6,712.5 874.7,712.5 883.7,712.5 892.8,712.5 901.8,712.5 910.9,712.5 919.9,628.4 928.9,712.5 938.0,712.5 947.0,712.5 956.1,712.5 965.1,712.5 974.2,712.5 983.2,712.5 992.3,712.5 1001.3,712.5 1010.3,712.5 1019.4,712.5 1028.4,712.5 1037.5,712.5 1046.5,712.5 1055.6,712.5 1064.6,712.5 1073.7,597.0 1082.7,712.5 1091.8,712.5 1100.8,712.5 1109.8,712.5 1118.9,712.5 1127.9,712.5 1137.0,712.5 1146.0,712.5" fill="none" stroke="#A030B8" stroke-width="1"/>
<polyline points="6.3,404.4 15.4,397.2 24.4,397.2 33.5,392.4 42.5,396.4 51.6,398.0 60.6,401.2 69.7,402.8 78.7,423.6 87.8,363.6 96.8,375.6 105.8,433.2 114.9,442.8 123.9,427.6 133.0,429.2 142.0,438.8 151.1,438.8 160.1,442.0 169.2,431.6 178.2,434.0 187.2,432.4 196.3,430.0 205.3,424.4 214.4,426.8 223.4,416.6 232.5,408.0 241.5,411.2 250.6,418.4 259.6,416.8 268.7,420.0 277.7,432.8 286.7,438.4 295.8,430.4 304.8,418.4 313.9,401.6 322.9,382.4 332.0,366.4 341.0,352.0 350.1,339.0 359.1,328.8 368.2,316.8 377.2,318.0 386.2,295.2 395.3,284.0 404.3,268.8 413.4,253.6 422.4,258.4 431.5,238.4 440.5,231.4 449.6,227.0 458.6,232.4 467.6,246.6 476.7,260.0 485.7,262.4 494.8,252.8 503.8,226.8 512.9,218.0 521.9,207.6 531.0,214.8 540.0,212.4 549.1,211.0 558.1,209.4 567.1,211.2 576.2,220.0 585.2,230.4 594.3,240.0 603.3,254.4 612.4,265.6 621.4,280.0 630.5,280.8 639.5,285.6 648.5,301.0 657.6,320.8 666.6,341.6 675.7,354.4 684.7,368.8 693.8,376.8 702.8,388.8 711.9,405.6 720.9,410.6 730.0,425.2 739.0,444.4 748.0,463.3 757.1,453.2 766.1,446.0 775.2,444.4 784.2,443.6 793.3,442.8 802.3,430.8 811.4,437.2 820.4,446.8 829.4,433.0 838.5,433.6 847.5,442.4 856.6,437.6 865.6,432.0 874.7,424.0 883.7,428.8 892.8,448.0 901.8,459.2 910.9,479.2 919.9,494.4 928.9,496.0 938.0,468.6 947.0,455.6 956.1,441.2 965.1,432.4 974.2,434.8 983.2,436.4 992.3,436.4 1001.3,438.0 1010.3,451.6 1019.4,446.0 1028.4,449.2 1037.5,452.2 1046.5,463.8 1055.6,492.8 1064.6,524.0 1073.7,555.2 1082.7,549.6 1091.8,519.2 1100.8,488.0 1109.8,472.0 1118.9,472.0 1127.9,472.0 1137.0,462.4 1146.0,450.0" fill="none" stroke="#FF8A3A" stroke-width="1"/>
<polyline points="6.3,390.8 15.4,388.4 24.4,387.6 33.5,389.2 42.5,390.0 51.6,394.0 60.6,410.0 69.7,403.6 78.7,400.9 87.8,440.0 96.8,486.4 105.8,493.6 114.9,452.4 123.9,439.4 133.0,450.2 142.0,455.0 151.1,473.6 160.1,473.6 169.2,457.0 178.2,460.2 187.2,447.4 196.3,425.2 205.3,421.2 214.4,416.4 223.4,429.0 232.5,423.2 241.5,411.2 250.6,421.6 259.6,415.2 268.7,403.2 277.7,416.8 286.7,438.4 295.8,408.0 304.8,380.0 313.9,376.0 322.9,369.6 332.0,345.0 341.0,318.0 350.1,288.0 359.1,292.0 368.2,294.4 377.2,288.0 386.2,293.6 395.3,295.2 404.3,283.2 413.4,264.0 422.4,242.4 431.5,256.8 440.5,289.6 449.6,286.8 458.6,273.6 467.6,292.8 476.7,358.4 485.7,384.0 494.8,390.0 503.8,252.0 512.9,146.0 521.9,235.0 531.0,264.0 540.0,271.2 549.1,280.0 558.1,287.0 567.1,297.6 576.2,293.6 585.2,295.2 594.3,300.8 603.3,305.6 612.4,306.4 621.4,312.0 630.5,334.4 639.5,339.2 648.5,332.8 657.6,344.8 666.6,365.6 675.7,372.8 684.7,377.6 693.8,405.6 702.8,412.0 711.9,418.0 720.9,428.4 730.0,446.0 739.0,473.5 748.0,473.5 757.1,466.8 766.1,447.6 775.2,442.8 784.2,439.6 793.3,429.2 802.3,427.6 811.4,437.2 820.4,438.0 829.4,428.2 838.5,422.4 847.5,428.8 856.6,428.0 865.6,412.8 874.7,419.2 883.7,424.0 892.8,424.8 901.8,425.6 910.9,447.2 919.9,505.0 928.9,552.0 938.0,478.0 947.0,399.6 956.1,424.4 965.1,439.6 974.2,423.6 983.2,424.4 992.3,436.4 1001.3,446.0 1010.3,434.0 1019.4,436.4 1028.4,449.2 1037.5,455.4 1046.5,455.0 1055.6,465.6 1064.6,530.0 1073.7,578.0 1082.7,616.8 1091.8,540.0 1100.8,490.0 1109.8,441.6 1118.9,433.6 1127.9,445.6 1137.0,455.2 1146.0,451.0" fill="none" stroke="#FFFF00" stroke-width="1"/>
<polyline points="6.3,414.0 15.4,409.2 24.4,424.4 33.5,422.0 42.5,406.0 51.6,413.2 60.6,411.6 69.7,418.8 78.7,438.0 87.8,468.0 96.8,518.4 105.8,440.0 114.9,361.2 123.9,386.8 133.0,431.6 142.0,414.8 151.1,453.2 160.1,462.8 169.2,433.2 178.2,407.6 187.2,394.8 196.3,390.0 205.3,382.8 214.4,381.7 223.4,390.0 232.5,384.8 241.5,406.4 250.6,309.0 259.6,258.8 268.7,419.0 277.7,455.2 286.7,427.2 295.8,425.6 304.8,427.2 313.9,424.8 322.9,415.2 332.0,394.4 341.0,378.0 350.1,362.8 359.1,354.0 368.2,361.2 377.2,367.6 386.2,368.4 395.3,350.0 404.3,334.8 413.4,312.8 422.4,295.2 431.5,300.8 440.5,304.0 449.6,330.0 458.6,320.0 467.6,317.6 476.7,358.4 485.7,379.0 494.8,343.0 503.8,275.2 512.9,234.8 521.9,229.2 531.0,209.2 540.0,208.0 549.1,230.0 558.1,223.6 567.1,223.7 576.2,240.8 585.2,243.2 594.3,270.4 603.3,292.8 612.4,303.2 621.4,325.6 630.5,345.6 639.5,350.4 648.5,362.4 657.6,372.0 666.6,387.2 675.7,397.6 684.7,410.4 693.8,408.5 702.8,422.0 711.9,444.0 720.9,446.0 730.0,486.0 739.0,508.0 748.0,521.2 757.1,508.6 766.1,475.0 775.2,462.6 784.2,465.0 793.3,433.2 802.3,442.0 811.4,437.2 820.4,446.8 829.4,424.2 838.5,421.9 847.5,435.2 856.6,424.0 865.6,419.2 874.7,419.2 883.7,422.4 892.8,417.6 901.8,442.4 910.9,487.0 919.9,532.0 928.9,515.2 938.0,479.0 947.0,431.6 956.1,410.8 965.1,402.0 974.2,405.2 983.2,423.6 992.3,426.0 1001.3,426.0 1010.3,410.0 1019.4,410.0 1028.4,428.4 1037.5,434.6 1046.5,444.6 1055.6,472.0 1064.6,538.0 1073.7,596.0 1082.7,590.4 1091.8,527.0 1100.8,460.8 1109.8,418.4 1118.9,422.4 1127.9,430.4 1137.0,440.0 1146.0,446.0" fill="none" stroke="#282828" stroke-width="1"/>
<polyline points="6.3,435.0 15.4,461.0 24.4,195.0 33.5,128.0 42.5,460.0 51.6,424.4 60.6,422.0 69.7,441.2 78.7,442.0 87.8,494.0 96.8,545.6 105.8,499.0 114.9,452.6 123.9,479.2 133.0,461.4 142.0,465.4 151.1,476.0 160.1,449.4 169.2,457.0 178.2,463.8 187.2,455.8 196.3,447.0 205.3,451.8 214.4,445.8 223.4,474.4 232.5,456.4 241.5,416.0 250.6,433.6 259.6,466.4 268.7,460.6 277.7,476.0 286.7,481.4 295.8,466.4 304.8,465.0 313.9,460.0 322.9,465.0 332.0,461.2 341.0,439.0 350.1,414.8 359.1,393.2 368.2,400.4 377.2,406.8 386.2,384.4 395.3,377.2 404.3,386.0 413.4,386.0 422.4,381.2 431.5,402.0 440.5,395.6 449.6,384.4 458.6,323.2 467.6,327.2 476.7,430.0 485.7,451.6 494.8,428.0 503.8,345.0 512.9,318.4 521.9,307.2 531.0,281.6 540.0,255.2 549.1,237.4 558.1,239.6 567.1,255.2 576.2,248.0 585.2,240.8 594.3,252.8 603.3,274.4 612.4,273.3 621.4,280.0 630.5,293.6 639.5,301.6 648.5,309.0 657.6,343.2 666.6,353.6 675.7,358.4 684.7,378.4 693.8,377.6 702.8,378.4 711.9,402.4 720.9,418.8 730.0,438.0 739.0,466.8 748.0,474.2 757.1,450.8 766.1,438.0 775.2,432.4 784.2,430.0 793.3,444.4 802.3,420.4 811.4,422.0 820.4,446.0 829.4,430.2 838.5,424.0 847.5,432.0 856.6,428.0 865.6,412.8 874.7,407.2 883.7,392.0 892.8,403.2 901.8,432.8 910.9,468.0 919.9,508.0 928.9,521.6 938.0,470.0 947.0,433.2 956.1,428.4 965.1,419.6 974.2,406.8 983.2,398.8 992.3,415.6 1001.3,426.0 1010.3,438.8 1019.4,437.2 1028.4,414.0 1037.5,413.8 1046.5,431.8 1055.6,457.6 1064.6,490.0 1073.7,548.0 1082.7,559.2 1091.8,512.0 1100.8,468.8 1109.8,465.6 1118.9,444.0 1127.9,448.0 1137.0,472.8 1146.0,476.0" fill="none" stroke="#20FF20" stroke-width="1"/>
<polyline points="6.3,462.6 15.4,461.0 24.4,457.4 33.5,458.9 42.5,454.6 51.6,453.1 60.6,455.4 69.7,461.5 78.7,478.0 87.8,486.5 96.8,486.7 105.8,491.2 114.9,485.0 123.9,476.6 133.0,478.4 142.0,480.8 151.1,496.0 160.1,489.6 169.2,478.4 178.2,457.9 187.2,457.9 196.3,472.8 205.3,456.0 214.4,442.9 223.4,447.0 232.5,459.6 241.5,456.8 250.6,460.0 259.6,468.4 268.7,495.2 277.7,502.4 286.7,497.6 295.8,489.6 304.8,479.2 313.9,468.8 322.9,455.5 332.0,437.0 341.0,418.8 350.1,415.6 359.1,403.6 368.2,392.4 377.2,390.0 386.2,384.4 395.3,374.8 404.3,367.6 413.4,353.2 422.4,349.2 431.5,350.8 440.5,346.2 449.6,351.8 458.6,361.0 467.6,374.0 476.7,382.0 485.7,370.8 494.8,352.4 503.8,327.2 512.9,314.4 521.9,288.8 531.0,284.0 540.0,291.2 549.1,283.2 558.1,282.4 567.1,289.6 576.2,304.8 585.2,304.0 594.3,292.0 603.3,296.0 612.4,303.6 621.4,314.8 630.5,333.6 639.5,341.6 648.5,353.6 657.6,368.8 666.6,366.9 675.7,373.6 684.7,383.2 693.8,388.8 702.8,409.6 711.9,410.1 720.9,413.8 730.0,434.8 739.0,444.4 748.0,444.4 757.1,446.8 766.1,438.0 775.2,430.0 784.2,423.6 793.3,422.0 802.3,427.6 811.4,421.2 820.4,422.8 829.4,424.6 838.5,428.8 847.5,420.0 856.6,410.4 865.6,406.4 874.7,400.8 883.7,409.6 892.8,417.6 901.8,435.2 910.9,463.2 919.9,475.2 928.9,463.2 938.0,445.4 947.0,441.2 956.1,418.0 965.1,410.0 974.2,419.6 983.2,409.2 992.3,416.4 1001.3,414.0 1010.3,410.0 1019.4,416.4 1028.4,414.0 1037.5,421.4 1046.5,430.6 1055.6,459.2 1064.6,487.2 1073.7,507.0 1082.7,501.6 1091.8,492.0 1100.8,473.6 1109.8,462.4 1118.9,443.2 1127.9,438.4 1137.0,447.2 1146.0,440.0" fill="none" stroke="#2828FF" stroke-width="1"/>
</g>
</svg>
<!-- /CHART -->
<!-- right toolbar -->
<div class="a" style="left:1186px;top:125px;width:1px;height:592px;background:#ACA899"></div>
<div class="a" style="left:1187px;top:125px;width:1px;height:593px;background:#fff"></div>
<div class="a" style="left:1159px;top:716px;width:28px;height:1px;background:#ACA899"></div>
<div class="a" style="left:1159px;top:125px;width:28px;height:1px;background:#B8B5A8"></div><div class="a" style="left:1159px;top:126px;width:27px;height:1px;background:#fff"></div>
</body></html>
